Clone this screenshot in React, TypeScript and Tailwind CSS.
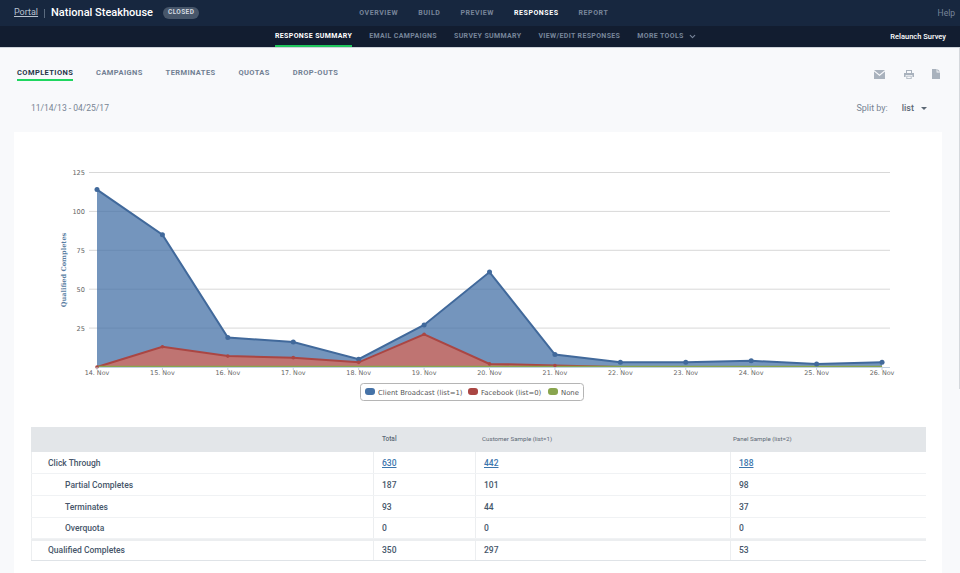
import { ChevronDown } from "lucide-react";

const mainNav = ["OVERVIEW", "BUILD", "PREVIEW", "RESPONSES", "REPORT"];
const subNav = ["RESPONSE SUMMARY", "EMAIL CAMPAIGNS", "SURVEY SUMMARY", "VIEW/EDIT RESPONSES"];
const tabs = ["COMPLETIONS", "CAMPAIGNS", "TERMINATES", "QUOTAS", "DROP-OUTS"];

const blue = [114, 85, 19, 16, 5, 27, 61, 8, 3, 3, 4, 2, 3];
const red = [0, 13, 7, 6, 3, 21, 2, 1, 0, 0, 0, 0, 0];
const days = [14, 15, 16, 17, 18, 19, 20, 21, 22, 23, 24, 25, 26];
const ticks = [25, 50, 75, 100, 125];

const X0 = 97;
const DX = 65.42;
const Y0 = 367;
const px = (i: number) => X0 + i * DX;
const py = (v: number) => Y0 - v * 1.556;
const line = (d: number[]) => d.map((v, i) => `${px(i)},${py(v)}`).join(" ");
const area = (d: number[]) => `${X0},${Y0} ${line(d)} ${px(12)},${Y0}`;
// stacked series: blue only fills the band above the red line
const band = `${line(blue)} ${[...red].map((v, i) => `${px(i)},${py(v)}`).reverse().join(" ")}`;

// chart coordinates are page coordinates, the viewBox starts at the card's corner (14,132)
function Chart() {
  return (
    <svg width="928" height="285" viewBox="14 132 928 285" className="block">
      {ticks.map((t) => (
        <g key={t}>
          <line x1={X0 - 8} x2={890} y1={py(t)} y2={py(t)} stroke="#d8d8d8" />
          <text x={85} y={py(t) + 2.5} textAnchor="end" fontSize="6.6" fill="#666" fontFamily="DejaVu Sans">
            {t}
          </text>
        </g>
      ))}
      <text
        transform="translate(66 270) rotate(-90)"
        textAnchor="middle"
        fontSize="6.6"
        fontWeight="700"
        fill="#5a7ea3"
        fontFamily="DejaVu Serif"
      >
        Qualified Completes
      </text>
      <polygon points={band} fill="#4572a7" fillOpacity="0.75" />
      <polygon points={area(red)} fill="#aa4643" fillOpacity="0.75" />
      <polyline points={line(blue)} fill="none" stroke="#41699b" strokeWidth="2" />
      <polyline points={line(red)} fill="none" stroke="#aa4643" strokeWidth="2" />
      <line x1={X0} x2={px(12)} y1={Y0 - 0.5} y2={Y0 - 0.5} stroke="#89a54e" strokeWidth="1.5" />
      <line x1={X0} x2={890} y1={Y0 + 0.5} y2={Y0 + 0.5} stroke="#c0d0e0" />
      {blue.map((v, i) => (
        <circle key={i} cx={px(i)} cy={py(v)} r="2.5" fill="#41699b" />
      ))}
      {red.slice(0, 8).map((v, i) => (
        <circle key={i} cx={px(i)} cy={py(v)} r="1.8" fill="#aa4643" />
      ))}
      {days.map((d, i) => (
        <g key={d}>
          <line x1={px(i)} x2={px(i)} y1={Y0} y2={Y0 + 3} stroke="#c0d0e0" />
          <text x={px(i)} y={Y0 + 7.5} textAnchor="middle" fontSize="6.4" fill="#666" fontFamily="DejaVu Sans">
            {d}. Nov
          </text>
        </g>
      ))}
      <rect x="360.5" y="383.5" width="223" height="17" rx="3" fill="#fff" stroke="#b5b5b5" />
      <rect x="365" y="388" width="10" height="7" rx="3" fill="#4572a7" />
      <text x="378" y="394.5" fontSize="6.9" fill="#555" fontFamily="DejaVu Sans">
        Client Broadcast (list=1)
      </text>
      <rect x="468" y="388" width="10" height="7" rx="3" fill="#aa4643" />
      <text x="481" y="394.5" fontSize="6.9" fill="#555" fontFamily="DejaVu Sans">
        Facebook (list=0)
      </text>
      <rect x="548" y="388" width="10" height="7" rx="3" fill="#89a54e" />
      <text x="561" y="394.5" fontSize="6.9" fill="#555" fontFamily="DejaVu Sans">
        None
      </text>
    </svg>
  );
}

const rows = [
  { label: "Click Through", vals: ["630", "442", "188"], link: true, h: "h-[22px]", pad: "pt-[1px]" },
  { label: "Partial Completes", vals: ["187", "101", "98"], sub: true, h: "h-[22px]", pad: "pt-[2px]" },
  { label: "Terminates", vals: ["93", "44", "37"], sub: true, h: "h-[22px]", pad: "pt-[2px]" },
  { label: "Overquota", vals: ["0", "0", "0"], sub: true, h: "h-[21px]", pad: "pt-[1px]" },
  { label: "Qualified Completes", vals: ["350", "297", "53"], h: "h-[21px]", total: true, pad: "pb-[1px]" },
];

function ResponseTable() {
  return (
    <div className="ml-[17px] mt-[10px] w-[895px] border-b border-[#dfe3e7] text-[#46566a]">
      <div className="grid h-[25px] grid-cols-[342px_102px_255px_196px] items-center bg-[#e3e6e9] text-[6.2px] text-[#5c6875]">
        <span />
        <span className="pl-[9px] text-[6.5px] font-medium">Total</span>
        <span className="pl-[7px]">Customer Sample (list=1)</span>
        <span className="pl-[3px]">Panel Sample (list=2)</span>
      </div>
      {rows.map((r) => (
        <div
          key={r.label}
          className={`grid grid-cols-[342px_102px_255px_196px] items-center text-[8.5px] font-medium ${r.h} ${r.total ? "border-t-2 border-[#eceef0]" : "border-b border-[#f0f2f4]"}`}
        >
          <span className={`flex h-full items-center border-l border-[#eceef0] ${r.pad} ${r.sub ? "pl-[33px]" : "pl-[16px]"}`}>{r.label}</span>
          {r.vals.map((v, i) => (
            <span key={i} className={`flex h-full items-center border-l border-[#eceef0] pl-[8px] ${r.pad}`}>
              {r.link ? <a className="text-[#3b75ad] underline">{v}</a> : v}
            </span>
          ))}
        </div>
      ))}
    </div>
  );
}

function MailIcon() {
  return (
    <svg width="11" height="9" viewBox="0 0 11 9" className="block">
      <path d="M0 0h11L5.5 4.6z" fill="#a9b2bd" />
      <path d="M0 1.4v7.6h11V1.4L5.5 6z" fill="#a9b2bd" />
    </svg>
  );
}

function PrinterIcon() {
  return (
    <svg width="10" height="9" viewBox="0 0 10 9" className="block" fill="#a9b2bd">
      <path d="M2 0h6v3H7V1H3v2H2z" />
      <path d="M0 3h10v4H8.4V5H1.6v2H0z" />
      <path d="M2.4 5.8h5.2V9H2.4zM3.2 6.6v1.6h3.6V6.6z" />
    </svg>
  );
}

function DocIcon() {
  return (
    <svg width="8" height="10" viewBox="0 0 8 10" className="block" fill="#a9b2bd">
      <path d="M0 0h4.6v3.4H8V10H0z" />
      <path d="M5.4 0 8 2.6H5.4z" />
    </svg>
  );
}

export default function App() {
  return (
    <div className="relative flex h-[573px] w-[960px] flex-col overflow-hidden bg-[#f8f9fb] font-['Roboto',sans-serif]">
      <header className="flex h-[26px] items-center bg-[#17273f] pl-[14px] pr-[5px]">
        <a className="text-[9px] text-[#b8c2cf] underline">Portal</a>
        <span className="mx-[6px] h-[9px] w-px bg-[#5a6a7e]" />
        <span className="text-[11px] font-medium text-white">National Steakhouse</span>
        <span className="ml-[10px] rounded-full bg-[#47566a] px-[5px] py-[1px] text-[6.5px] font-bold tracking-[0.06em] text-[#d5dae0]">CLOSED</span>
        <nav className="ml-[160px] flex gap-[20px] text-[7px] font-bold tracking-[0.08em] text-[#77859a]">
          {mainNav.map((n) => (
            <span key={n} className={n === "RESPONSES" ? "text-white" : ""}>
              {n}
            </span>
          ))}
        </nav>
        <span className="ml-auto text-[8.5px] text-[#77859a]">Help</span>
      </header>
      <div className="flex h-[21px] items-stretch bg-[#121d30] pl-[275px] pr-[14px] text-[7px] font-bold tracking-[0.05em] text-[#77859a]">
        <nav className="flex gap-[17px]">
          {subNav.map((n) => (
            <span key={n} className={`flex items-center ${n === "RESPONSE SUMMARY" ? "border-b-2 border-[#1fc65c] pt-[2px] text-white" : ""}`}>
              {n}
            </span>
          ))}
          <span className="flex items-center gap-[4px]">
            MORE TOOLS <ChevronDown size={9} strokeWidth={3} />
          </span>
        </nav>
        <span className="ml-auto flex items-center text-[7.5px] font-medium tracking-normal text-white">Relaunch Survey</span>
      </div>
      <div className="h-[1px] bg-[#ced3da]" />

      <div className="flex items-start pl-[17px] pr-[20px] pt-[19px]">
        <nav className="flex gap-[22.8px] text-[7.5px] font-bold tracking-[0.055em] text-[#718093]">
          {tabs.map((t) => (
            <span key={t} className={t === "COMPLETIONS" ? "border-b-2 border-[#1fd65f] pb-[1px] text-[#27364a]" : ""}>
              {t}
            </span>
          ))}
        </nav>
        <div className="ml-auto mt-[2px] flex items-center gap-[18.5px]">
          <MailIcon />
          <PrinterIcon />
          <DocIcon />
        </div>
      </div>
      <div className="flex items-center pl-[31px] pr-[33px] pt-[20px] text-[9px] leading-[14px] text-[#778493]">
        <span className="text-[8.5px]">11/14/13 - 04/25/17</span>
        <span className="ml-auto">Split by:</span>
        <span className="ml-[14px] font-medium text-[#5c6875]">list</span>
        <span className="ml-[7px] h-0 w-0 border-x-[3px] border-t-[3px] border-x-transparent border-t-[#5c6875]" />
      </div>

      <main className="ml-[14px] mt-[17px] w-[928px] flex-1 bg-white">
        <Chart />
        <ResponseTable />
      </main>

      {/* sliver of the browser scrollbar at the right edge */}
      <div className="absolute right-0 top-[48px] h-[341px] w-px bg-[#d5d8dc]" />
    </div>
  );
}
